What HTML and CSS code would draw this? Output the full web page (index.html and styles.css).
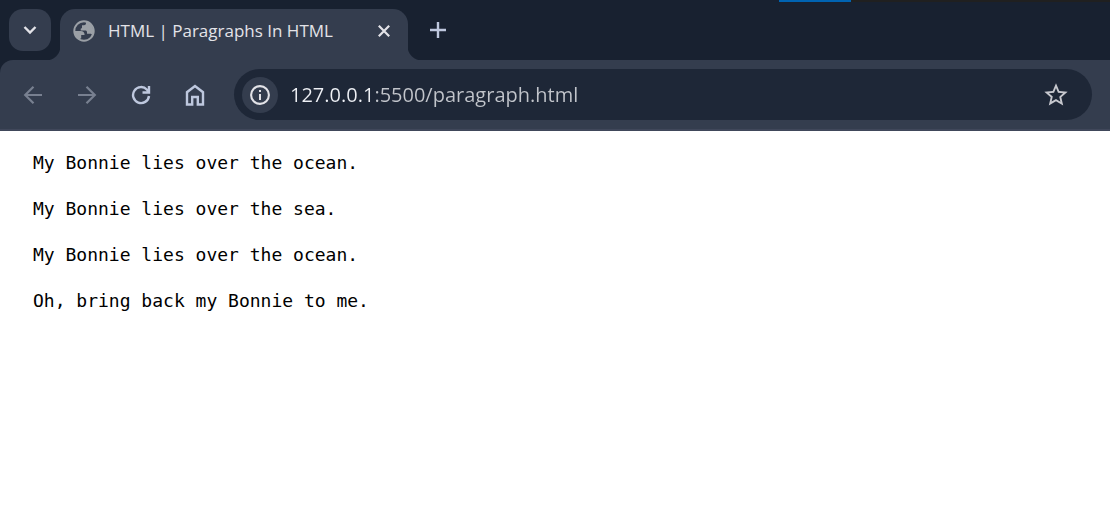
FILE: index.html
```html
<!DOCTYPE html>
<html lang="en">
<head>
<meta charset="utf-8">
<meta name="viewport" content="width=device-width, initial-scale=1">
<title>HTML | Paragraphs In HTML</title>
<link rel="stylesheet" href="styles.css">
</head>
<body>
<header class="browser">
  <div class="window-edge"><span class="window-edge-accent"></span></div>
  <div class="tab-strip">
    <button class="tab-search" type="button" aria-label="Search tabs">
      <svg width="14" height="10" viewBox="0 0 14 10"><path d="M1.500 2l5.500 5.500L12.500 2" fill="none" stroke="currentColor" stroke-width="2.400"/></svg>
    </button>
    <div class="tab">
      <svg class="favicon" width="22" height="22" viewBox="0 0 22 22">
        <circle cx="11" cy="11" r="9.700" fill="none" stroke="currentColor" stroke-width="2"/>
        <path d="M13 1.500v1.800c0 1.200-.8 1.900-2 1.900H9v2.400c0 .8-.6 1.200-1.300 1.200v1.600h4.600c1 0 1.700.7 1.700 1.600v1.800h3.200c1 0 1.700.6 2 1.400L21 11 18 4z" fill="currentColor"/>
        <path d="M1 11h6.500c2.700 0 4.100 1.400 4.100 4h-3.400v3.400h-1L8 21 3 17z" fill="currentColor"/>
      </svg>
      <span class="tab-title">HTML | Paragraphs In HTML</span>
      <button class="tab-close" type="button" aria-label="Close tab">
        <svg width="12" height="12" viewBox="0 0 12 12"><path d="M.8.8l10.400 10.400M11.200.8L.8 11.200" stroke="currentColor" stroke-width="2.200"/></svg>
      </button>
    </div>
    <button class="new-tab" type="button" aria-label="New tab">
      <svg width="16" height="16" viewBox="0 0 16 16"><path d="M8 0v16M0 8h16" stroke="currentColor" stroke-width="2.400"/></svg>
    </button>
  </div>
  <nav class="toolbar" aria-label="Navigation">
    <div class="nav-buttons">
      <button class="nav-button is-disabled" type="button" disabled aria-label="Back">
        <svg width="20" height="20" viewBox="0 0 20 20"><path d="M19 10H2.500M10.500 1.700L2.200 10l8.300 8.300" fill="none" stroke="currentColor" stroke-width="2.200"/></svg>
      </button>
      <button class="nav-button is-disabled" type="button" disabled aria-label="Forward">
        <svg width="20" height="20" viewBox="0 0 20 20"><path d="M1 10h16.500M9.500 1.700l8.300 8.300-8.300 8.300" fill="none" stroke="currentColor" stroke-width="2.200"/></svg>
      </button>
      <button class="nav-button" type="button" aria-label="Reload">
        <svg width="20" height="20" viewBox="0 0 20 20"><path d="M18 11a8 8 0 1 1-2-6.300L18 7M18 1v6.500h-6.500" fill="none" stroke="currentColor" stroke-width="2.400"/></svg>
      </button>
      <button class="nav-button" type="button" aria-label="Home">
        <svg width="20" height="22" viewBox="0 0 20 22"><path d="M2 20.500V8.200L10 2l8 6.200v12.300h-5.200v-7.500H7.200v7.500z" fill="none" stroke="currentColor" stroke-width="2.400"/></svg>
      </button>
    </div>
    <div class="address-bar">
      <button class="site-info" type="button" aria-label="View site information">
        <svg width="20" height="20" viewBox="0 0 20 20"><circle cx="10" cy="10" r="8.900" fill="none" stroke="currentColor" stroke-width="2.100"/><path d="M10 9v6M10 5v2" stroke="currentColor" stroke-width="2"/></svg>
      </button>
      <input class="address" type="text" aria-label="Address" value="127.0.0.1:5500/paragraph.html" spellcheck="false">
      <button class="bookmark" type="button" aria-label="Bookmark this tab">
        <svg width="28" height="28" viewBox="0 0 24 24"><path d="M22 9.240l-7.190-.62L12 2 9.190 8.630 2 9.240l5.460 4.730L5.820 21 12 17.270 18.180 21l-1.630-7.030L22 9.240zM12 15.400l-3.760 2.270 1-4.280-3.320-2.880 4.380-.38L12 6.100l1.710 4.040 4.380.38-3.320 2.880 1 4.280L12 15.400z" fill="currentColor"/></svg>
      </button>
    </div>
  </nav>
</header>
<main class="page">
  <p>My Bonnie lies over the ocean.</p>
  <p>My Bonnie lies over the sea.</p>
  <p>My Bonnie lies over the ocean.</p>
  <p>Oh, bring back my Bonnie to me.</p>
</main>
</body>
</html>
```

FILE: styles.css
```css
* { box-sizing: border-box; }

:root {
  --frame: #182130;
  --surface: #343d4e;
  --field: #1e2737;
  --text: #e3e3e8;
  --icon: #bec8de;
}

body {
  margin: 0;
  background: #fff;
  color: #000;
}

button {
  display: flex;
  align-items: center;
  justify-content: center;
  flex: none;
  padding: 0;
  border: 0;
  background: none;
  color: var(--icon);
}

svg { display: block; flex: none; }

.browser {
  position: relative;
  background: var(--frame);
  font-family: "Open Sans", "Noto Sans", sans-serif;
}

.window-edge {
  position: absolute;
  top: 0;
  right: 0;
  width: 331px;
  height: 2px;
  background: #202020;
}

.window-edge-accent {
  display: block;
  width: 72px;
  height: 2px;
  background: #0063b1;
}

.tab-strip {
  display: flex;
  padding: 9px 9px 0;
}

.tab-search {
  width: 42px;
  height: 42px;
  margin-right: 9px;
  border-radius: 14px;
  background: var(--surface);
  color: var(--text);
}

.tab {
  position: relative;
  display: flex;
  align-items: center;
  width: 348px;
  height: 51px;
  padding: 0 14px 8px 13px;
  border-radius: 15px 15px 0 0;
  background: var(--surface);
  color: var(--text);
}

.tab::before,
.tab::after {
  content: "";
  position: absolute;
  bottom: 0;
  width: 14px;
  height: 14px;
}

.tab::before {
  right: 100%;
  background: radial-gradient(circle at 0 0, transparent 14px, var(--surface) 15px);
}

.tab::after {
  left: 100%;
  background: radial-gradient(circle at 100% 0, transparent 14px, var(--surface) 15px);
}

.favicon { color: #9ba0a6; }

.tab-title {
  flex: 1;
  margin-left: 13px;
  overflow: hidden;
  font-size: 17px;
  line-height: 24px;
  white-space: nowrap;
}

.tab-close {
  width: 20px;
  height: 20px;
  color: var(--text);
}

.new-tab {
  width: 42px;
  height: 42px;
  margin-left: 9px;
}

.toolbar {
  display: flex;
  align-items: center;
  padding: 9px 18px;
  border-bottom: 2px solid #40475a;
  border-radius: 13px 0 0 0;
  background: var(--surface);
}

.nav-buttons {
  display: flex;
  gap: 12px;
  margin-right: 18px;
  margin-left: -6px;
}

.nav-button {
  width: 42px;
  height: 42px;
}

.is-disabled { color: #788090; }

.address-bar {
  display: flex;
  flex: 1;
  align-items: center;
  height: 51px;
  padding: 0 15px 0 8px;
  border-radius: 26px;
  background: var(--field);
}

.site-info {
  width: 36px;
  height: 36px;
  border-radius: 50%;
  background: var(--surface);
  color: var(--text);
}

.address {
  flex: 1;
  min-width: 0;
  height: 36px;
  margin-left: 12px;
  padding: 0;
  border: 0;
  outline: 0;
  background: linear-gradient(to right, #eef0f5 80px, #c2c5cb 80px);
  background-clip: text;
  -webkit-background-clip: text;
  color: #c2c5cb;
  -webkit-text-fill-color: transparent;
  font: 20px/28px "Open Sans", "Noto Sans", sans-serif;
}

.bookmark {
  width: 42px;
  height: 42px;
  color: #c7c8ce;
}

.page {
  display: grid;
  gap: 22px;
  padding: 20px 33px;
  font-family: "DejaVu Sans Mono", "Liberation Mono", monospace;
  font-size: 18px;
  line-height: 24px;
}

.page p { margin: 0; }
```
